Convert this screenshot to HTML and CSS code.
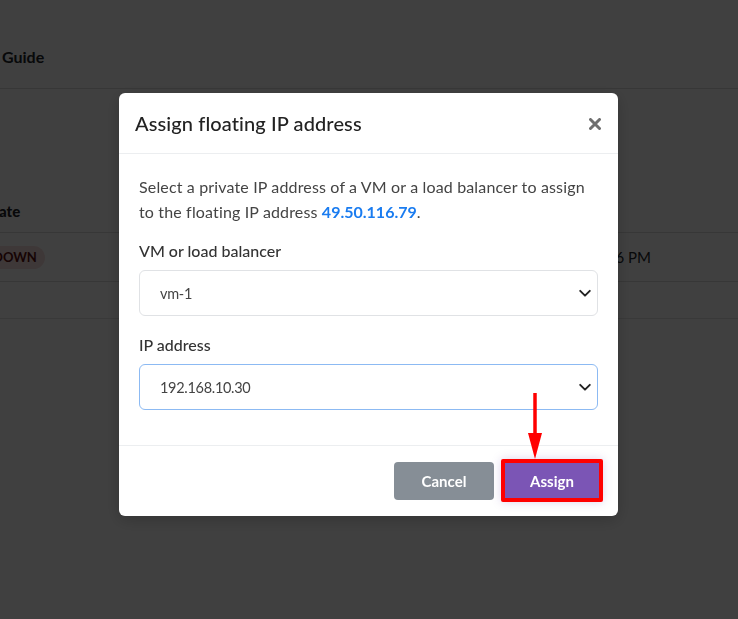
FILE: index.html
```html
<!DOCTYPE html>
<html lang="en">
<head>
<meta charset="utf-8">
<title>Assign floating IP address</title>
<link rel="stylesheet" href="styles.css">
</head>
<body>
<div class="page">
  <div class="topbar"><span class="guide">Guide</span></div>
  <div class="thead"><span class="th">ate</span></div>
  <div class="trow">
    <span class="badge">DOWN</span>
    <span class="time">Jan 14, 2025, 10:26 PM</span>
  </div>
  <div class="trow empty"></div>
</div>
<div class="backdrop"></div>
<div class="modal-wrap">
  <div class="modal">
    <div class="modal-header">
      <h2 class="modal-title">Assign floating IP address</h2>
      <svg class="close" width="12" height="12" viewBox="0 0 12 12"><path d="M1.5 1.5 10.5 10.5M10.5 1.5 1.5 10.5" stroke="#6f6f6f" stroke-width="3" stroke-linecap="round"/></svg>
    </div>
    <div class="modal-body">
      <p class="intro">Select a private IP address of a VM or a load balancer to assign to the floating IP address <span class="ip">49.50.116.79</span>.</p>
      <div class="group">
        <label class="label">VM or load balancer</label>
        <div class="select"><span>vm-1</span>
          <svg class="chev" width="14" height="14" viewBox="0 0 16 16"><path d="M2.5 5.5 8 11l5.5-5.5" fill="none" stroke="#222" stroke-width="2.2" stroke-linecap="round" stroke-linejoin="round"/></svg>
        </div>
      </div>
      <div class="group">
        <label class="label">IP address</label>
        <div class="select focus"><span>192.168.10.30</span>
          <svg class="chev" width="14" height="14" viewBox="0 0 16 16"><path d="M2.5 5.5 8 11l5.5-5.5" fill="none" stroke="#222" stroke-width="2.2" stroke-linecap="round" stroke-linejoin="round"/></svg>
        </div>
      </div>
    </div>
    <div class="modal-footer">
      <button class="btn cancel">Cancel</button>
      <button class="btn assign">Assign</button>
    </div>
  </div>
  <svg class="arrow" width="20" height="70" viewBox="0 0 20 70">
    <line x1="10" y1="0" x2="10" y2="44" stroke="#ff0000" stroke-width="3.5"/>
    <polygon points="3,40 17,40 10,66" fill="#ff0000"/>
  </svg>
</div>
</body>
</html>
```

FILE: styles.css
```css
* { box-sizing: border-box; }
html, body { margin: 0; padding: 0; }
body {
  width: 738px;
  height: 619px;
  overflow: hidden;
  background: #ffffff;
  font-family: "Lato", "Noto Sans", sans-serif;
  color: #212529;
}
.page { width: 738px; }
.topbar {
  height: 89px;
  border-bottom: 1px solid #dcdcdc;
  padding: 47px 0 0 2px;
}
.guide { font-size: 16px; font-weight: 700; line-height: 20px; display: block; }
.thead {
  height: 144px;
  border-bottom: 1px solid #dcdcdc;
  display: flex;
  align-items: flex-end;
  padding-bottom: 11px;
}
.th { font-size: 15px; font-weight: 900; line-height: 20px; margin-left: -1px; }
.trow {
  height: 49px;
  border-bottom: 1px solid #dcdcdc;
  display: flex;
  align-items: center;
  justify-content: space-between;
  padding-right: 87px;
}
.trow.empty { height: 37px; border-bottom: 1px solid #e4e4e4; }
.badge {
  margin-left: -27px;
  background: #f8dede;
  color: #5a1010;
  font-size: 13px;
  font-weight: 700;
  border-radius: 12px;
  padding: 4px 8px 4px 20px;
  line-height: 15px;
}
.time { font-size: 15px; }
.backdrop {
  position: fixed;
  inset: 0;
  background: rgba(0, 0, 0, 0.75);
}
.modal-wrap {
  position: fixed;
  inset: 0;
  padding: 93px 0 0 119px;
}
.modal {
  width: 499px;
  background: #fff;
  border-radius: 6px;
  box-shadow: 0 4px 16px rgba(0,0,0,0.2);
}
.modal-header {
  height: 61px;
  border-bottom: 1px solid #eceef0;
  display: flex;
  align-items: center;
  justify-content: space-between;
  padding: 0 17px 0 16px;
}
.modal-title {
  margin: 0;
  font-size: 20px;
  font-weight: 500;
  color: #222;
  letter-spacing: 0.1px;
}
.close { display: block; margin-top: 1px; }
.modal-body { padding: 20px 20px 35px 20px; }
.intro {
  margin: 0 0 17px 0;
  font-size: 16px;
  line-height: 25px;
  letter-spacing: 0.15px;
  color: #444;
}
.ip { color: #1a7cf0; font-weight: 700; letter-spacing: 0; }
.group { margin-top: 1px; }
.group + .group { margin-top: 19px; }
.label {
  display: block;
  font-size: 16px;
  font-weight: 500;
  color: #333;
  line-height: 20px;
  margin-bottom: 9px;
}
.select {
  height: 46px;
  border: 1px solid #e0e2e5;
  border-radius: 6px;
  display: flex;
  align-items: center;
  justify-content: space-between;
  padding: 0 5px 0 20px;
  font-size: 14.5px;
  letter-spacing: -0.3px;
  color: #444;
}
.select.focus { border-color: #8cbaf3; }
.modal-footer {
  border-top: 1px solid #eceef0;
  height: 71px;
  display: flex;
  align-items: center;
  justify-content: flex-end;
  padding: 0 15px 0 0;
  gap: 7px;
}
.btn {
  font-family: "Lato", "Noto Sans", sans-serif;
  font-size: 15px;
  font-weight: 700;
  color: #fff;
  border: none;
  border-radius: 4px;
}
.cancel {
  width: 100px;
  height: 38px;
  background: #868e96;
}
.assign {
  width: 102px;
  height: 43px;
  background: #7b55b5;
  border: 4px solid #ff0000;
  border-radius: 2px;
  margin-top: -1px;
  box-shadow: 0 0 10px rgba(120, 80, 180, 0.25);
}
.arrow {
  position: absolute;
  left: 525px;
  top: 393px;
}
```
